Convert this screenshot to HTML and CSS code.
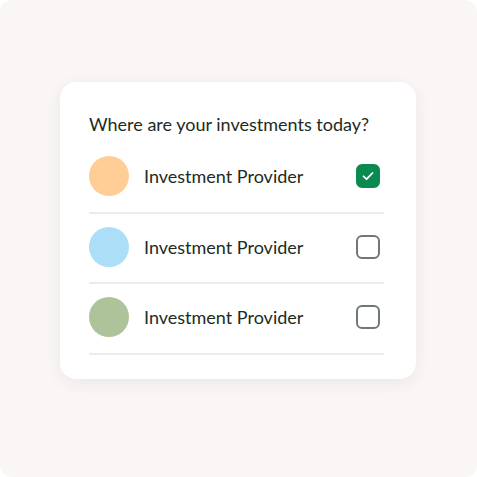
FILE: index.html
```html
<!DOCTYPE html>
<html>
<head>
<meta charset="utf-8">
<link rel="stylesheet" href="styles.css">
</head>
<body>
<div class="frame">
  <div class="card">
    <h1 class="title">Where are your investments today?</h1>
    <ul class="list">
      <li class="row">
        <span class="dot dot-orange"></span>
        <span class="label">Investment Provider</span>
        <span class="check checked">
          <svg width="14" height="14" viewBox="0 0 14 14"><path d="M2.5 7.3 L5.6 10.2 L11.5 4" fill="none" stroke="#fff" stroke-width="1.8" stroke-linecap="round" stroke-linejoin="round"/></svg>
        </span>
      </li>
      <li class="row">
        <span class="dot dot-blue"></span>
        <span class="label">Investment Provider</span>
        <span class="check"></span>
      </li>
      <li class="row">
        <span class="dot dot-green"></span>
        <span class="label">Investment Provider</span>
        <span class="check"></span>
      </li>
    </ul>
  </div>
</div>
</body>
</html>
```

FILE: styles.css
```css
* { box-sizing: border-box; }
html, body { margin: 0; padding: 0; background: #ffffff; }
body { font-family: Lato, "Noto Sans", sans-serif; color: #1d2b22; }
.frame {
  width: 477px;
  height: 477px;
  background: #f9f6f5;
  border-radius: 12px;
  display: flex;
  align-items: flex-start;
  justify-content: flex-start;
  padding: 82px 0 0 60px;
}
.card {
  width: 356px;
  height: 297px;
  background: #ffffff;
  border-radius: 16px;
  box-shadow: 0 4px 16px rgba(60, 40, 30, 0.07);
  padding: 31px 32px 0 29px;
}
.title {
  margin: 0;
  font-size: 18px;
  font-weight: 400;
  line-height: 22px;
  white-space: nowrap;
}
.list {
  list-style: none;
  margin: 8px 0 0 0;
  padding: 0;
}
.row {
  display: flex;
  align-items: center;
  height: 70.5px;
  border-bottom: 2px solid #ececeb;
  padding-bottom: 2px;
}
.dot {
  width: 40px;
  height: 40px;
  border-radius: 50%;
  flex: none;
}
.dot-orange { background: #ffce96; }
.dot-blue { background: #aadff7; }
.dot-green { background: #adc49b; }
.label {
  margin-left: 15px;
  font-size: 18px;
  flex: 1;
}
.check {
  width: 24px;
  height: 24px;
  border: 2px solid #707873;
  border-radius: 6px;
  margin-right: 4px;
  display: flex;
  align-items: center;
  justify-content: center;
}
.check.checked {
  background: #0b8a4f;
  border-color: #0b8a4f;
}
```
